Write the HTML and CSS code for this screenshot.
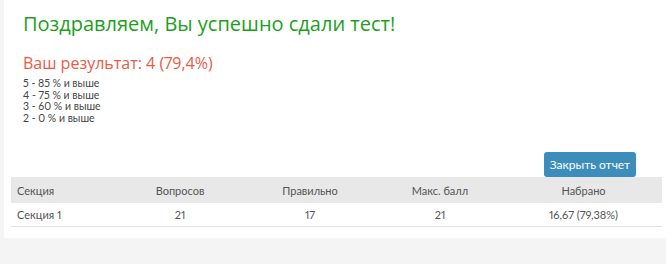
FILE: index.html
```html
<!DOCTYPE html>
<html lang="ru">
<head>
    <meta charset="UTF-8">
    <meta name="viewport" content="width=device-width, initial-scale=1.0">
    <title>Результат теста</title>
    <link rel="stylesheet" href="styles.css">
</head>
<body>
    <div class="box">
        <div class="result">
            <h1 class="result__title">Поздравляем, Вы успешно сдали тест!</h1>
            <h2 class="result__score">Ваш результат: 4 (79,4%)</h2>
            <div class="scale">
                <div>5 - 85 % и выше</div>
                <div>4 - 75 % и выше</div>
                <div>3 - 60 % и выше</div>
                <div>2 - 0 % и выше</div>
            </div>
        </div>
        <div class="actions">
            <button class="close-button" type="button">Закрыть отчет</button>
        </div>
        <table class="report-table">
            <thead>
                <tr>
                    <th class="col-section">Секция</th>
                    <th class="col-questions">Вопросов</th>
                    <th class="col-correct">Правильно</th>
                    <th class="col-max">Макс. балл</th>
                    <th>Набрано</th>
                </tr>
            </thead>
            <tbody>
                <tr>
                    <td class="col-section">Секция 1</td>
                    <td>21</td>
                    <td>17</td>
                    <td>21</td>
                    <td>16,67 (79,38%)</td>
                </tr>
            </tbody>
        </table>
    </div>
</body>
</html>
```

FILE: styles.css
```css
html, body {
    margin: 0;
    padding: 0;
    background-color: #f4f4f4;
    overflow: hidden;
}
body {
    padding-left: 4px;
    font-family: Lato, "Open Sans", sans-serif;
    font-variant-numeric: proportional-nums;
    color: #555;
}
.box {
    background-color: white;
    padding: 0 4px 11px 7px;
}
.result {
    padding: 9px 12px 0;
}
.result__title {
    font-family: "Open Sans", sans-serif;
    font-weight: 400;
    font-size: 20px;
    line-height: 30px;
    color: #1c9f1c;
    margin: 0;
}
.result__score {
    font-family: "Open Sans", sans-serif;
    font-weight: 400;
    font-size: 16px;
    line-height: 22px;
    color: #ea5a43;
    margin: 13px 0 4px;
}
.scale {
    font-size: 10.5px;
    line-height: 11.5px;
    color: #444;
}
.actions {
    display: flex;
    justify-content: flex-end;
    padding: 28px 26px 0 0;
}
.close-button {
    font-family: Lato, "Open Sans", sans-serif;
    font-size: 12px;
    color: white;
    background-color: #3c8dbc;
    border: none;
    border-radius: 3px;
    width: 92px;
    height: 25px;
    padding: 0;
    cursor: pointer;
}
.report-table {
    width: 651px;
    border-collapse: collapse;
    font-size: 11px;
    color: #555;
}
.report-table th {
    font-weight: 400;
    background-color: #e8e8e8;
    height: 26px;
    padding: 0 6px;
    text-align: center;
}
.report-table td {
    height: 23px;
    padding: 0 6px;
    text-align: center;
    border-bottom: 1px solid #dbe3e8;
}
.report-table .col-section {
    text-align: left;
    width: 92px;
}
.col-questions,
.col-correct,
.col-max {
    width: 118px;
}
```
